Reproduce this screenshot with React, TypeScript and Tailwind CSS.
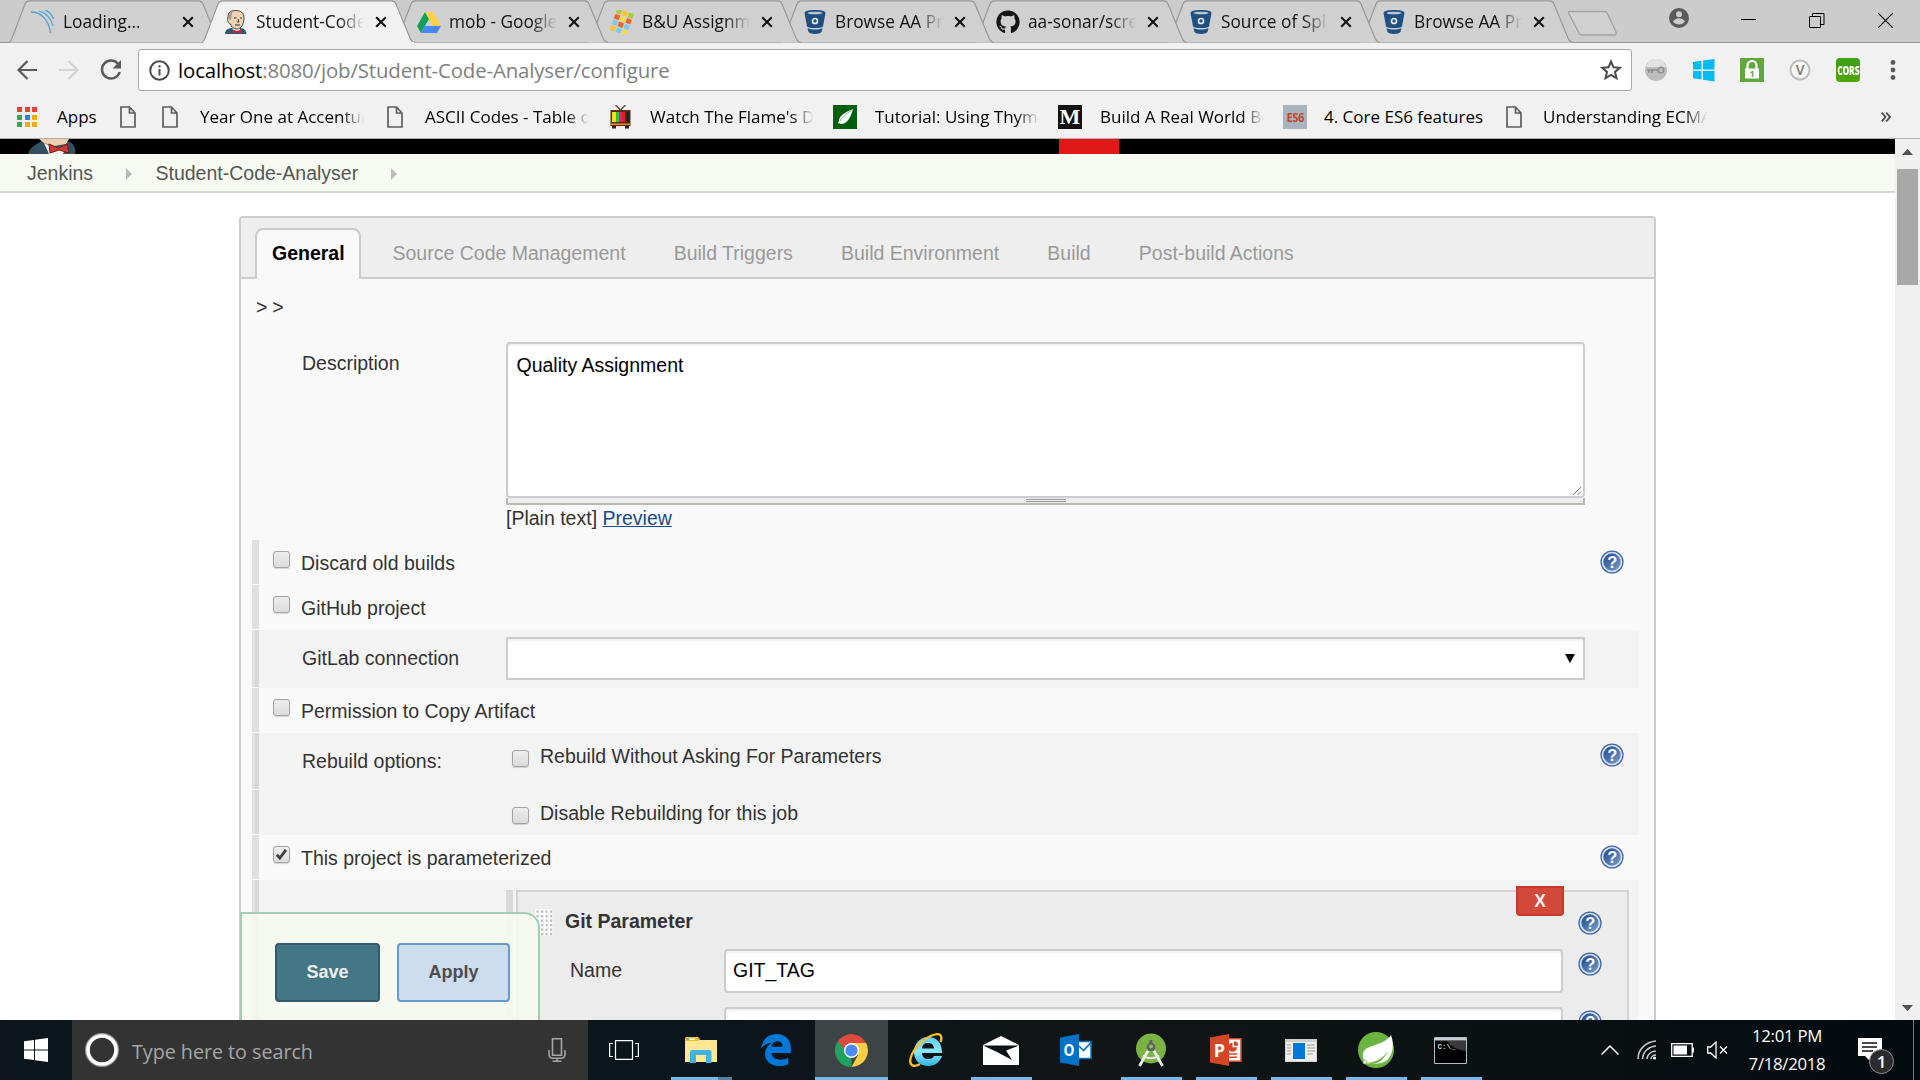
import React from "react";
import { FaGithub } from "react-icons/fa";

const chromeFont = "font-['Open_Sans',sans-serif]";

/* ---------- favicons ---------- */

function LoadingIcon() {
  return (
    <svg viewBox="0 0 24 24" className="h-6 w-6" fill="none" stroke="#4f9fd4" strokeWidth="1.3">
      <path d="M0 2c10 0 18 8 19.500 21" />
      <path d="M8 1c7 2 12 7 14 15" />
      <path d="M14 0c5 2 7 5 8.500 9" />
    </svg>
  );
}

function ButlerIcon() {
  return (
    <svg viewBox="0 0 24 24" className="h-6 w-6">
      <path d="M1 24c0-4 3-6 8-6h6c5 0 7 2 7.500 6z" fill="#33566b" />
      <path d="M8 15h8v6H9z" fill="#fff" />
      <path d="M4 7C4 2 7 .5 12 .5s8 2.500 8 7.500c0 6-3 11-7 11-3 0-6-2-6.500-5-2.500 0-3.500-4-2.500-7z" fill="#edd2b3" stroke="#3a332c" strokeWidth=".9" />
      <path d="M4.500 6C5 3 7 1.500 9 1.200 8 3 7.500 4 7.500 6L7 10l-2.500-1z" fill="#a59a8d" />
      <path d="M10 8h2.500M16 8h2M14 9l1 3h-2M11 15h5" stroke="#3a332c" strokeWidth="1" fill="none" />
      <path d="M9 19.500l4 1.500 4-1.500v4L13 22l-4 1.500z" fill="#d8232f" />
    </svg>
  );
}

function DriveIcon() {
  return (
    <svg viewBox="0 0 24 24" className="h-6 w-6">
      <path d="M8 2L0 16l4 7 8-14z" fill="#11a05b" />
      <path d="M8 2h8l8 14h-8z" fill="#fed046" />
      <path d="M8 16h16l-4 7H4z" fill="#4587f5" />
    </svg>
  );
}

function MosaicIcon() {
  const cells = ["#a8cf3a", "#f6c52c", "#a8cf3a", "#f2652a", "#fbe04a", "#f2652a", "#7cc8ee", "#f2652a", "#7cc8ee", "#f6c52c", "#7cc8ee", "#f6df3a"];
  return (
    <svg viewBox="0 0 24 24" className="h-6 w-6">
      <g transform="rotate(20 12 12)">
        {cells.map((c, i) => (
          <rect key={i} x={3 + (i % 3) * 6.2} y={0.5 + Math.floor(i / 3) * 6} width="5.200" height="5" rx=".8" fill={c} />
        ))}
      </g>
    </svg>
  );
}

function BucketIcon() {
  return (
    <svg viewBox="0 0 24 24" className="h-6 w-6">
      <path d="M1.500 3C2 .8 6 0 12 0s10 .8 10.500 3L20 16.500c-1 1-4 1.600-8 1.600s-7-.6-8-1.600z" fill="#205081" />
      <path d="M4.500 18.200c4 1.800 11 1.800 15 0L18.500 22c-1 1.300-3.500 2-6.500 2s-5.500-.7-6.500-2z" fill="#205081" />
      <ellipse cx="12" cy="3" rx="7.500" ry="1.300" fill="#b9c9da" />
      <circle cx="12" cy="11" r="2.500" fill="none" stroke="#e8eef4" strokeWidth="1.700" />
    </svg>
  );
}

const tabs = [
  { title: "Loading...", icon: <LoadingIcon /> },
  { title: "Student-Code", icon: <ButlerIcon />, active: true },
  { title: "mob - Google", icon: <DriveIcon /> },
  { title: "B&U Assignm", icon: <MosaicIcon /> },
  { title: "Browse AA Pr", icon: <BucketIcon /> },
  { title: "aa-sonar/scre", icon: <FaGithub className="h-6 w-6 text-[#161514]" /> },
  { title: "Source of Spl", icon: <BucketIcon /> },
  { title: "Browse AA Pr", icon: <BucketIcon /> },
];

function Tab({ title, icon, active, order }: { title: string; icon: React.ReactNode; active?: boolean; order: number }) {
  return (
    <div className="relative -mr-5 flex h-[43px] w-[213px] shrink-0 items-center pl-[22px]" style={{ zIndex: active ? 20 : 10 - order }}>
      <svg className="absolute inset-0 h-[43px] w-[213px]" viewBox="0 0 213 43">
        <path
          d="M0 42.500C1.500 42 2 40.500 3.500 37L16 4C17 1.500 18 .8 20 .8H190C192 .8 193 1.500 194 4L208 38C209 40.500 210 42 213 42.500"
          fill={active ? "#f1f1f1" : "#d0d0d0"}
          stroke="#999"
          strokeWidth="1.200"
        />
        {active && <path d="M1 42.600H212" stroke="#f1f1f1" strokeWidth="1.500" />}
      </svg>
      <span className="relative flex h-6 w-6">{icon}</span>
      <span className="relative ml-2 w-[108px] overflow-hidden text-[17.300px] leading-6 whitespace-nowrap text-[#111] [mask-image:linear-gradient(to_right,#000_76%,transparent)]">
        {title}
      </span>
      <svg className="relative ml-[11px] h-3 w-3" viewBox="0 0 12 12" stroke="#111" strokeWidth="2">
        <path d="M1.200 1.200L10.800 10.800M10.800 1.200L1.200 10.800" />
      </svg>
    </div>
  );
}

function TabStrip() {
  return (
    <div className="flex h-[43px] border-b border-[#999] bg-[#ccc] pl-[9px]">
      <div className="flex h-[43px]">
        {tabs.map((t, i) => (
          <Tab key={i} order={i} {...t} />
        ))}
      </div>
      <svg className="mt-[10px] ml-[13px] h-[27px] w-[54px]" viewBox="0 0 54 27">
        <path d="M4 1.500H38c2 0 3 .7 3.700 2.500L50 22c.8 2 0 3-2 3H17c-2.500 0-3.500-.8-4.300-2.600L3 4C2 2 2.500 1.500 4 1.500z" fill="#d0d0d0" stroke="#a2a2a2" strokeWidth="1.300" />
      </svg>
      <div className="ml-auto flex h-[40px] items-start">
        <svg className="mt-2 h-5 w-5" viewBox="0 0 20 20">
          <circle cx="10" cy="10" r="10" fill="#5a5a5a" />
          <circle cx="10" cy="6.200" r="3" fill="#ccc" />
          <path d="M4 13.500c1.500-2.500 4-3.200 6-3.200s4.500.7 6 3.200c-1.500 2-3.500 3-6 3s-4.500-1-6-3z" fill="#ccc" />
        </svg>
        <span className="mt-[19px] ml-[52px] h-px w-[15px] bg-black" />
        <svg className="mt-[12px] ml-[53px] h-4 w-4" viewBox="0 0 16 16" fill="none" stroke="#000">
          <path d="M.5 4.500H11.500V15.500H.5zM3.500 4V1.500H15V12.500H12" />
        </svg>
        <svg className="mt-[13px] mr-[27px] ml-[53px] h-[15px] w-[15px]" viewBox="0 0 15 15" stroke="#000" strokeWidth="1.100">
          <path d="M0 0L15 15M15 0L0 15" />
        </svg>
      </div>
    </div>
  );
}

function Toolbar() {
  return (
    <div className="flex h-[54px] items-center bg-[#f1f1f1] pl-[17px]">
      <svg className="h-5 w-5" viewBox="0 0 20 20" fill="none" stroke="#5a5a5a" strokeWidth="2.200">
        <path d="M20 10H2M10.500 1L1.500 10l9 9" />
      </svg>
      <svg className="ml-[22px] h-5 w-5" viewBox="0 0 20 20" fill="none" stroke="#d2d2d2" strokeWidth="2.200">
        <path d="M0 10H18M9.500 1l9 9-9 9" />
      </svg>
      <svg className="ml-[21px] h-[22px] w-[22px]" viewBox="0 0 22 22" fill="none" stroke="#5a5a5a" strokeWidth="2.500">
        <path d="M18.500 5.500A9 9 0 1 0 19.700 13" />
        <path d="M21 1v8.500h-8.500z" fill="#5a5a5a" stroke="none" />
      </svg>
      <div className="ml-4 flex h-[42px] w-[1494px] items-center rounded-[3px] border border-[#a8a8a8] bg-white pl-[10px]">
        <svg className="h-[21px] w-[21px]" viewBox="0 0 21 21">
          <circle cx="10.500" cy="10.500" r="9.300" fill="none" stroke="#4a4a4a" strokeWidth="2" />
          <path d="M9.500 9h2v6.500h-2zM9.500 5.300h2v2.200h-2z" fill="#4a4a4a" />
        </svg>
        <span className="ml-[8px] pb-px text-[20.400px] leading-7 tracking-[-0.130px] whitespace-nowrap text-[#808080]">
          <span className="text-black">localhost</span>:8080/job/Student-Code-Analyser/configure
        </span>
        <svg className="mr-[9px] ml-auto h-[22px] w-[22px]" viewBox="0 0 22 22" fill="none" stroke="#4a4a4a" strokeWidth="2">
          <path d="M11 2.500l2.500 5.800 6.300.5-4.800 4.100 1.500 6.200L11 15.800l-5.500 3.300L7 12.900 2.200 8.800l6.300-.5z" />
        </svg>
      </div>
      <svg className="ml-3 h-6 w-6" viewBox="0 0 24 24">
        <circle cx="12" cy="12" r="11" fill="#bdbdbd" />
        <path d="M2 9C4 3 8 1 12 1s8 2 10 8z" fill="#e2e2e2" />
        <circle cx="17" cy="12" r="2.800" fill="none" stroke="#8c8c8c" strokeWidth="1.600" />
        <path d="M14 12H3M5 12v3M8 12v3" stroke="#8c8c8c" strokeWidth="1.600" />
      </svg>
      <svg className="ml-6 h-6 w-6" viewBox="0 0 24 24" fill="#00bcf2">
        <path d="M1 4l8.500-1.300v8.700H1zM11 2.500L22.500 1v10.400H11zM1 13h8.500v8.500L1 20.200zM11 13h11.500v10.500L11 21.800z" />
      </svg>
      <svg className="ml-6 h-6 w-6" viewBox="0 0 24 24">
        <path d="M0 0h24v24H0z" fill="#5fa93c" />
        <path d="M7.500 11V7.500a4.500 4.500 0 0 1 9 0V11" fill="none" stroke="#fff" strokeWidth="2.200" />
        <path d="M5 10.500h14v10H5z" fill="#fff" />
        <text x="12" y="19" textAnchor="middle" fontSize="9" fontWeight="700" fill="#5fa93c">1</text>
      </svg>
      <svg className="ml-6 h-6 w-6" viewBox="0 0 24 24">
        <circle cx="12" cy="12" r="9.500" fill="#f7f7f7" stroke="#bbb" strokeWidth="2" />
        <text x="12" y="17" textAnchor="middle" fontSize="14" fontWeight="600" fill="#777">V</text>
      </svg>
      <span className="ml-6 flex h-6 w-6 items-center justify-center rounded bg-gradient-to-b from-[#3fa01a] to-[#4ca800]">
        <span className="scale-x-[0.78] scale-y-110 text-[11px] leading-none font-extrabold tracking-[-0.300px] text-white">CORS</span>
      </span>
      <svg className="ml-[30px] h-5 w-[6px]" viewBox="0 0 6 20" fill="#5a5a5a">
        <circle cx="3" cy="2.500" r="2.400" />
        <circle cx="3" cy="10" r="2.400" />
        <circle cx="3" cy="17.500" r="2.400" />
      </svg>
    </div>
  );
}

/* ---------- bookmarks ---------- */

function PageIcon() {
  return (
    <svg viewBox="0 0 16 22" className="h-[22px] w-4" fill="none" stroke="#5f5f5f" strokeWidth="1.700">
      <path d="M1 1h8.500L15 7v14H1zM9.500 1v6H15" />
    </svg>
  );
}

function AppsIcon() {
  const c = ["#ea4335", "#ea4335", "#ea4335", "#34a853", "#2f80ed", "#f9ab00", "#34a853", "#f9ab00", "#f9ab00"];
  return (
    <div className="grid h-5 w-5 grid-cols-3 gap-[2.500px]">
      {c.map((v, i) => (
        <span key={i} style={{ background: v }} />
      ))}
    </div>
  );
}

function TvIcon() {
  return (
    <svg viewBox="0 0 24 24" className="h-6 w-6">
      <path d="M6.500 0l5 5 5-5" stroke="#555" strokeWidth="1.500" fill="none" />
      <path d="M1.500 5h20v16h-20z" fill="#5a2c12" />
      <path d="M3 7h4v10H3z" fill="#f3e21b" />
      <path d="M7 7h3v10H7z" fill="#35c235" />
      <path d="M10 7h3v10h-3z" fill="#e01f8b" />
      <path d="M13 7h3v10h-3z" fill="#e02020" />
      <path d="M17.500 7h3v10h-3z" fill="#222" />
      <path d="M2 18.500h19v1.500H2z" fill="#e58a2d" />
      <path d="M3 21h4v2.500H3zM16 21h4v2.500h-4z" fill="#3a1c0c" />
    </svg>
  );
}

function LeafIcon() {
  return (
    <svg viewBox="0 0 24 24" className="h-6 w-6">
      <path d="M0 0h24v24H0z" fill="#005f0f" />
      <path d="M20 4c-4 2-14 5-14 12l-1 2 3 1c7 0 10-8 12-15z" fill="#fff" />
      <path d="M20 4c-5 4-9 6-13 12" stroke="#7fae86" fill="none" />
    </svg>
  );
}

const bookmarks: { icon: React.ReactNode; label?: string; cls: string; gap?: string; fade?: boolean }[] = [
  { icon: <AppsIcon />, label: "Apps", cls: "w-[103px]", gap: "ml-[20px]" },
  { icon: <PageIcon />, cls: "w-[42px]" },
  { icon: <PageIcon />, label: "Year One at Accentur", cls: "w-[225px]", gap: "ml-[22px]", fade: true },
  { icon: <PageIcon />, label: "ASCII Codes - Table o", cls: "w-[222px]", gap: "ml-[22px]", fade: true },
  { icon: <TvIcon />, label: "Watch The Flame's Da", cls: "w-[224px]", gap: "ml-[17px]", fade: true },
  { icon: <LeafIcon />, label: "Tutorial: Using Thyme", cls: "w-[225px]", gap: "ml-[18px]", fade: true },
  {
    icon: <span className="flex h-6 w-6 items-center justify-center bg-[#111] font-['Liberation_Serif',serif] text-[22px] leading-none font-bold text-white">M</span>,
    label: "Build A Real World Be",
    cls: "w-[225px]",
    gap: "ml-[18px]",
    fade: true,
  },
  {
    icon: (
      <span className="flex h-6 w-6 items-center justify-center bg-[#a7b4bd]">
        <span className="scale-x-[0.85] text-[13px] leading-none font-bold tracking-[-0.500px] text-[#c4432c]">ES6</span>
      </span>
    ),
    label: "4. Core ES6 features",
    cls: "w-[223px]",
    gap: "ml-[17px]",
  },
  { icon: <PageIcon />, label: "Understanding ECMA", cls: "w-[300px]", gap: "ml-[21px]", fade: true },
];

function Bookmarks() {
  return (
    <div className="flex h-[42px] items-center border-b border-[#b0b0b0] bg-[#f1f1f1] pb-px pl-[17px]">
      {bookmarks.map((b, i) => (
        <div key={i} className={`flex shrink-0 items-center ${b.cls}`}>
          <span className="shrink-0">{b.icon}</span>
          {b.label && (
            <span
              className={`${b.gap} block overflow-hidden text-[17px] leading-6 whitespace-nowrap text-black ${
                b.fade ? "w-[164px] [mask-image:linear-gradient(to_right,#000_86%,transparent)]" : ""
              }`}
            >
              {b.label}
            </span>
          )}
        </div>
      ))}
      <svg className="mr-[29px] ml-auto h-2.5 w-2.5" viewBox="0 0 10 10" fill="none" stroke="#4a4a4a" strokeWidth="1.800">
        <path d="M.7.700L4.500 5 .7 9.300M5.200.700L9 5 5.200 9.300" />
      </svg>
    </div>
  );
}

/* ---------- Jenkins page ---------- */

function Help() {
  return (
    <svg viewBox="0 0 24 24" className="h-6 w-6 shrink-0">
      <defs>
        <linearGradient id="helpFill" x1="0" y1="0" x2="1" y2="1">
          <stop offset="0" stopColor="#1b4289" />
          <stop offset="1" stopColor="#7ba3d3" />
        </linearGradient>
      </defs>
      <circle cx="12" cy="12" r="11.600" fill="#3f66a5" />
      <circle cx="12" cy="12" r="9.500" fill="url(#helpFill)" stroke="#d7e2f1" strokeWidth="1.700" />
      <text x="12.200" y="17.800" textAnchor="middle" fontSize="16.500" fontWeight="700" fill="#fff">?</text>
    </svg>
  );
}

function Check({ checked }: { checked?: boolean }) {
  return (
    <span className="flex h-[17px] w-[17px] shrink-0 items-center justify-center rounded-[3px] border border-[#a3a3a3] bg-gradient-to-b from-[#ededed] to-[#dcdcdc] shadow-[0_1px_1px_rgba(0,0,0,0.15)]">
      {checked && (
        <svg viewBox="0 0 13 13" className="h-[13px] w-[13px]" fill="none" stroke="#404040" strokeWidth="2.800">
          <path d="M1.800 6.800l3 3.200L11 1.800" />
        </svg>
      )}
    </span>
  );
}

function Row({ height, shaded, children }: { height: string; shaded?: boolean; children?: React.ReactNode }) {
  return (
    <div className={`flex ${height} ${shaded ? "bg-[#f3f3f3]" : ""}`}>
      <div className={`flex w-[7px] shrink-0 border-b border-[#f9f9f9] ${shaded ? "bg-[#d8d8d8]" : "bg-[#e0e0e0]"}`}>
        {shaded && <span className="w-[3px] bg-[#e0e0e0]" />}
      </div>
      {children}
    </div>
  );
}

function OptionRow({ label, checked, help }: { label: string; checked?: boolean; help?: boolean }) {
  return (
    <Row height="h-[45px]">
      <div className="flex w-full pr-[15px] pl-[14px]">
        <div className="mt-[11px]">
          <Check checked={checked} />
        </div>
        <span className="mt-[11px] ml-[11px] leading-6">{label}</span>
        {help && (
          <span className="mt-[10px] ml-auto">
            <Help />
          </span>
        )}
      </div>
    </Row>
  );
}

function Breadcrumbs() {
  const arrow = (
    <svg viewBox="0 0 6 12" className="h-3 w-1.5" fill="#bbb">
      <path d="M0 0l6 6-6 6z" />
    </svg>
  );
  return (
    <div className="flex h-[39px] items-center border-b-2 border-[#d3d7cf] bg-[#f6faf2] pt-[2px] pl-[27px] text-[19.500px] text-[#555753]">
      <span className="w-[99px]">Jenkins</span>
      {arrow}
      <span className="ml-[23.500px] w-[235.500px]">Student-Code-Analyser</span>
      {arrow}
    </div>
  );
}

function GitParameter() {
  return (
    <div className="ml-[247px] flex pt-[10px]">
      <div className="h-[200px] w-[7px] bg-[#d9d9d9]" />
      <div className="relative ml-[3px] h-[200px] w-[1113px] border-2 border-[#d3d3d3] bg-[#ececec]">
        <button className="absolute -top-[6px] right-[63px] h-[30px] w-12 rounded-b-[4px] border-2 border-[#c0392b] bg-[#d24939] text-[17.500px] leading-[26px] font-bold text-[#eee]">X</button>
        <div className="flex h-[55px] pt-[17px] pl-[17px]">
          <svg className="h-[27px] w-[18px]" viewBox="0 0 18 27">
            {Array.from({ length: 24 }, (_, i) => (
              <g key={i}>
                <rect x={(i % 4) * 4.5} y={Math.floor(i / 4) * 4.5} width="4" height="4" fill="#fff" />
                <rect x={(i % 4) * 4.5 + 1.5} y={Math.floor(i / 4) * 4.5 + 1.5} width="2.200" height="2.200" fill="#bdbdbd" />
              </g>
            ))}
          </svg>
          <b className="ml-3 leading-6">Git Parameter</b>
          <span className="mt-[2px] mr-[25px] ml-auto">
            <Help />
          </span>
        </div>
        <div className="flex h-[58px] pt-[2px] pl-[52px]">
          <span className="w-[154px] pt-[9px] leading-6">Name</span>
          <span className="h-[44px] w-[839px] rounded-[4px] border-2 border-[#ccc] bg-white pt-[7px] pl-[7px] leading-6 text-black shadow-[inset_0_2px_2px_rgba(0,0,0,0.06)]">GIT_TAG</span>
          <span className="mt-[3px] ml-[15px]">
            <Help />
          </span>
        </div>
        <div className="flex h-[58px] pt-[2px] pl-[206px]">
          <span className="h-[44px] w-[839px] rounded-[4px] border-2 border-[#ccc] bg-white shadow-[inset_0_2px_2px_rgba(0,0,0,0.06)]" />
          <span className="mt-[3px] ml-[15px]">
            <Help />
          </span>
        </div>
      </div>
    </div>
  );
}

function ConfigPanel() {
  return (
    <div className="mt-[23px] ml-[239px] h-[900px] w-[1417px] rounded-t-[4px] border-2 border-[#ccc] bg-[#f9f9f9] text-[19.500px] text-[#333]">
      <div className="flex h-[61px] items-end border-b-2 border-[#ccc] bg-[#eee] pl-[14px] text-[#999]">
        <div className="-mb-[2px] h-[51px] w-[106px] rounded-t-[8px] border-2 border-b-0 border-[#ccc] bg-[#f9f9f9] pt-[11px] pl-[15px] leading-6 font-bold text-black">General</div>
        <div className="ml-[31.500px] flex gap-[48.100px] pb-[12px] leading-6 whitespace-nowrap">
          <span>Source Code Management</span>
          <span>Build Triggers</span>
          <span>Build Environment</span>
          <span>Build</span>
          <span>Post-build Actions</span>
        </div>
      </div>
      <div className="h-[63px] pt-[16px] pl-[15px] leading-6 tracking-[-0.300px]">&gt; &gt;</div>
      <div className="flex h-[198px] pl-[61px]">
        <span className="w-[204px] pt-[9px] leading-6">Description</span>
        <div className="w-[1079px]">
          <div className="flex h-[156px] items-end justify-between rounded-[4px] border-2 border-[#ccc] bg-white pl-[8.500px] text-black shadow-[inset_0_2px_2px_rgba(0,0,0,0.06)]">
            <span className="self-start pt-[9px] leading-6">Quality Assignment</span>
            <svg className="h-3 w-3" viewBox="0 0 12 12" stroke="#777">
              <path d="M2 11L10 3M6.500 11L10 7.500" />
            </svg>
          </div>
          <div className="flex h-[7px] justify-center border-2 border-t-0 border-[#b8b8b0] bg-[#eee]">
            <span className="mt-px h-[3px] w-10 border-y border-[#999]" />
          </div>
          <div className="pt-px leading-6">
            [Plain text] <a className="text-[#204a87] underline">Preview</a>
          </div>
        </div>
      </div>
      <div className="pr-[15px] pl-[11px]">
        <OptionRow label="Discard old builds" help />
        <OptionRow label="GitHub project" />
        <Row height="h-[58px]" shaded>
          <span className="ml-[43px] w-[204px] pt-[16px] leading-6">GitLab connection</span>
          <div className="mt-[7px] flex h-[43px] w-[1079px] items-center justify-end border-2 border-[#ccc] bg-white pr-[8px] shadow-[inset_0_2px_2px_rgba(0,0,0,0.06)]">
            <svg viewBox="0 0 10 9" className="h-[9px] w-[10px]">
              <path d="M0 0h10L5 9z" />
            </svg>
          </div>
        </Row>
        <OptionRow label="Permission to Copy Artifact" />
        <Row height="h-[57px]" shaded>
          <span className="ml-[43px] w-[210px] pt-[16px] leading-6">Rebuild options:</span>
          <div className="mt-[17px]">
            <Check />
          </div>
          <span className="ml-[11px] pt-[11px] leading-6">Rebuild Without Asking For Parameters</span>
          <span className="mt-[10px] mr-[15px] ml-auto">
            <Help />
          </span>
        </Row>
        <Row height="h-[45px]" shaded>
          <div className="mt-[17px] ml-[253px]">
            <Check />
          </div>
          <span className="ml-[11px] pt-[11px] leading-6">Disable Rebuilding for this job</span>
        </Row>
        <OptionRow label="This project is parameterized" checked help />
        <Row height="h-[200px]" shaded>
          <GitParameter />
        </Row>
      </div>
    </div>
  );
}

function JenkinsPage() {
  return (
    <div className="relative flex h-[881px] overflow-hidden bg-white font-['Liberation_Sans',Arial,sans-serif]">
      <div className="w-[1895px] shrink-0">
        <div className="flex h-[15px] items-start bg-black pl-[28px]">
          <svg className="h-[15px] w-[50px]" viewBox="0 0 50 15">
            <path d="M0 15C2 8 9 5 14 2l28 1c5 3 6 8 5 12z" fill="#335061" />
            <path d="M11 0h30l-3 5-12 2-10-3z" fill="#edcfae" />
            <path d="M16 4l5 11h14l4-9-12 3z" fill="#f0f0f0" />
            <path d="M21 5l9 4 9-4 2 9-10-3-9 3z" fill="#d33833" stroke="#701a18" />
          </svg>
          <span className="ml-[981px] h-[15px] w-[60px] bg-[#e01818]" />
        </div>
        <Breadcrumbs />
        <ConfigPanel />
      </div>
      <div className="flex w-[25px] flex-col items-center bg-[#f0f0f0]">
        <svg viewBox="0 0 11 6" className="mt-[10px] h-[6px] w-[11px]" fill="#505050">
          <path d="M0 6L5.500 0 11 6z" />
        </svg>
        <span className="mt-[14px] h-[116px] w-[21px] bg-[#a8a8a8]" />
        <svg viewBox="0 0 11 6" className="mt-auto mb-[9px] h-[6px] w-[11px]" fill="#505050">
          <path d="M0 0L5.500 6 11 0z" />
        </svg>
      </div>
      <div className="absolute top-[773px] left-[240px] flex h-[110px] w-[300px] gap-[17px] rounded-tr-[16px] border-2 border-b-0 border-[#a4cdb8] bg-[#f5f9ef]/90 pt-[29px] pl-[33px] text-[18px] font-bold">
        <button className="h-[59px] w-[105px] rounded-[4px] border-2 border-[#345a6b] bg-[#437786] text-[#eee]">Save</button>
        <button className="h-[59px] w-[113px] rounded-[4px] border-2 border-[#6699cc] bg-[#ccdded] text-[#4d4d4d]">Apply</button>
      </div>
    </div>
  );
}

/* ---------- taskbar ---------- */

function ExplorerIcon() {
  return (
    <svg viewBox="0 0 32 27" className="h-[27px] w-8">
      <path d="M0 1h12l3 2h17v22H0z" fill="#ffe793" />
      <path d="M1 0h12l2 2-2 2H0V1z" fill="#f0bd2c" />
      <path d="M4 1.500h6v1.500H4z" fill="#fff" />
      <path d="M2 1.500h2v1.500H2z" fill="#3fb3e6" />
      <path d="M5 26V14.500l1.500-1.500h18.500l1.500 1.500V26h-5.500v-8H11v8z" fill="#3fb3e6" />
    </svg>
  );
}

function EdgeIcon() {
  return (
    <svg viewBox="0 0 30 32" className="h-8 w-[30px]">
      <path d="M0 14.500C1.500 5.500 7 0 15.500 0 25 0 30 6.500 30 14.500V19H10.500c.3 4.700 4.500 6.700 9 6.700 3 0 5.500-.7 7.800-2v6.500c-3 1.300-6 1.800-9.300 1.800C9.500 32 4 27 4 20c0-5 2.600-9 7.200-11.300C6.300 8.800 2.500 11 0 14.500zm10.700-1.700h10.800c0-3.600-1.700-5.500-5-5.500-3.200 0-5.300 2.400-5.800 5.500z" fill="#0078d7" />
    </svg>
  );
}

function ChromeIcon() {
  return (
    <svg viewBox="0 0 32 32" className="h-[33px] w-[33px]">
      <path d="M16 16V32A16 16 0 0 1 2.100 8z" fill="#1da261" />
      <path d="M16 8.500h14.100A16 16 0 0 1 16 32l6.500-12z" fill="#ffce43" />
      <path d="M9.500 20L2.100 8 8 5l8 4z" fill="#1da261" />
      <path d="M2.900 6.800A16 16 0 0 1 30.100 8.700H16a7.500 7.500 0 0 0-7.400 6z" fill="#dd4b3e" />
      <circle cx="16" cy="16" r="7.300" fill="#fff" />
      <circle cx="16" cy="16" r="5.900" fill="#4a8af4" />
    </svg>
  );
}

function IeIcon() {
  return (
    <svg viewBox="0 0 34 34" className="h-[34px] w-[34px]">
      <defs>
        <linearGradient id="ieFill" x1="0" y1="0" x2="0" y2="1">
          <stop offset="0" stopColor="#5ccdf5" />
          <stop offset=".5" stopColor="#8be8ff" />
          <stop offset="1" stopColor="#35b1e6" />
        </linearGradient>
      </defs>
      <path d="M19 4c9 0 14 6 14 16H13c0 4 3 6 6.500 6 3 0 4.500-1 5.500-3h8c-2 6-7 10-13.500 10C10.500 33 5 27 5 19S11 4 19 4zm-6 11.500h12c0-3.500-2.500-5.500-6-5.500s-6 2-6 5.500z" fill="url(#ieFill)" />
      <path d="M31.500 9C34 3 31 0 26 1.500 16 4 4 15 1.500 25.500 0 33 5 34.500 11 31" fill="none" stroke="#fac21c" strokeWidth="2.300" />
    </svg>
  );
}

function MailIcon() {
  return (
    <svg viewBox="0 0 36 29" className="h-[29px] w-9">
      <path d="M0 9L18 0l18 9v20H0z" fill="#fff" />
      <path d="M0 9.500h36l-13 5 6 9.500L14 16z" fill="#0d1214" />
    </svg>
  );
}

function OutlookIcon() {
  return (
    <svg viewBox="0 0 32 32" className="h-8 w-8">
      <path d="M17 7.500h14v17H17z" fill="#fff" stroke="#0072c6" strokeWidth="1.500" />
      <path d="M19 12l4.500 4.500 7.500-8" fill="none" stroke="#0072c6" strokeWidth="1.600" />
      <path d="M0 3.500L19 0v32L0 28.500z" fill="#0072c6" />
      <text x="9" y="22" textAnchor="middle" fontSize="16.500" fontWeight="700" fill="#fff" textLength="11" lengthAdjust="spacingAndGlyphs">O</text>
    </svg>
  );
}

function AndroidStudioIcon() {
  return (
    <svg viewBox="0 0 32 34" className="h-[34px] w-8">
      <circle cx="16" cy="15.500" r="15" fill="#7cb342" />
      <path d="M4.500 33l9.500-17M27.500 33L18 16" fill="none" stroke="#eee" strokeWidth="2.800" />
      <path d="M8 22.500c4 3.500 12 3.500 16 0" fill="none" stroke="#eee" strokeWidth="2" />
      <path d="M14.500 7h3v3a4.500 4.500 0 0 1 2.500 6l-1 2h-6l-1-2a4.500 4.500 0 0 1 2.500-6z" fill="#5c6360" />
      <circle cx="16" cy="13.500" r="2" fill="#8bbf5a" />
    </svg>
  );
}

function PowerPointIcon() {
  return (
    <svg viewBox="0 0 32 32" className="h-8 w-8">
      <path d="M17 4.700h14v22.500H17z" fill="#fff" stroke="#d24726" strokeWidth="1.500" />
      <path d="M19 20h8M19 23.300h8" stroke="#d24726" strokeWidth="1.500" />
      <path d="M22.500 8.800A4.500 4.500 0 1 0 27 13.300H22.500z" fill="#d24726" />
      <path d="M24 7.300v4.500h4.300A4.500 4.500 0 0 0 24 7.300z" fill="#d24726" />
      <path d="M0 3.500L19 0v32L0 28.500z" fill="#d24726" />
      <text x="9.500" y="22.500" textAnchor="middle" fontSize="18" fontWeight="700" fill="#fff">P</text>
    </svg>
  );
}

function WindowIcon() {
  return (
    <svg viewBox="0 0 32 23" className="h-[23px] w-8">
      <path d="M0 0h32v23H0z" fill="#eee" stroke="#bbb" />
      <path d="M0 0h32v3H0z" fill="#cfcfcf" />
      <path d="M8 4h12v16H8z" fill="#0078d7" />
      <path d="M2 6h4M2 9h4M2 12h4M2 15h4M22 6h8M22 9h8M22 12h8M22 15h6" stroke="#999" strokeWidth="1.200" />
    </svg>
  );
}

function SpringIcon() {
  return (
    <svg viewBox="0 0 36 36" className="h-9 w-9">
      <circle cx="18" cy="18" r="18" fill="#6db33f" />
      <path d="M33 3c3 8 2.500 17-2 23-4 5.500-12 6.500-23 5.500C5 28 4 24 5.500 20 8.500 12.500 26 14 33 3z" fill="#fff" />
      <path d="M8 31c8 0 17-4 22-12-4 9-10 13-17 13z" fill="#6db33f" />
      <circle cx="7" cy="30" r="2" fill="#fff" stroke="#6db33f" strokeWidth=".8" />
    </svg>
  );
}

function CmdIcon() {
  return (
    <svg viewBox="0 0 33 27" className="h-[27px] w-[33px]">
      <path d="M.5.500h32v26H.5z" fill="#000" stroke="#b5bcc4" />
      <path d="M1 1h31v2.500H1z" fill="#c9ced6" />
      <path d="M13 4h19v10C24 13 17 10 13 4z" fill="#3a3a3a" />
      <text x="3.500" y="11.500" fontFamily="Liberation Mono, monospace" fontSize="7.500" fontWeight="700" fill="#ddd">C:\_</text>
    </svg>
  );
}

function TaskItem({ children, line, active }: { children: React.ReactNode; line?: boolean; active?: boolean }) {
  return (
    <div className="flex h-[60px] w-[75px] shrink-0 flex-col items-center">
      <div className={`flex h-[57px] items-center justify-center pt-[3px] ${active ? "w-[73px] bg-[#3d4446] pr-px" : "w-full pr-[2px]"}`}>{children}</div>
      {line && <span className={`h-[3px] bg-[#76b9ed] ${active ? "w-[73px]" : "w-[61px]"}`} />}
    </div>
  );
}

function Taskbar() {
  return (
    <div className={`flex h-[60px] bg-[linear-gradient(90deg,#0c161b_0%,#0a161c_35%,#111515_55%,#0c1213_75%,#030b10_100%)] text-white ${chromeFont}`}>
      <div className="flex w-[72px] items-center pl-6">
        <svg viewBox="0 0 24 24" className="h-6 w-6" fill="#fff">
          <path d="M0 3.300L10 2v9.500H0zM11 1.800L24 0v11.500H11zM0 12.500h10V22L0 20.700zM11 12.500h13V24L11 22.200z" />
        </svg>
      </div>
      <div className="flex w-[516px] items-center bg-[#333] pr-[22px] pl-[13px]">
        <svg viewBox="0 0 34 34" className="h-[34px] w-[34px]" fill="none">
          <circle cx="17" cy="17" r="16" stroke="#999" strokeWidth="2" />
          <circle cx="17" cy="17" r="14" stroke="#fff" strokeWidth="3.600" />
        </svg>
        <span className="ml-[13px] pt-[3px] text-[19.800px] leading-7 tracking-[-0.060px] text-[#a6a6a6]">Type here to search</span>
        <svg viewBox="0 0 18 24" className="ml-auto h-6 w-[18px]" fill="none" stroke="#a6a6a6" strokeWidth="1.600">
          <path d="M4.500 .8h9v16.500h-9zM1 12v4c0 3 1.500 4.300 4 4.300h8c2.500 0 4-1.300 4-4.300v-4M9 20v3M4.500 23.200h9" />
        </svg>
      </div>
      <div className="flex w-[76px] shrink-0 items-center justify-center pr-[5px]">
        <svg viewBox="0 0 30 20" className="h-5 w-[30px]" fill="none" stroke="#fff" strokeWidth="1.200">
          <path d="M6.500 .6h17v18.800h-17zM4 3.500H.6v13H4M26 3.500h3.400v13H26" />
        </svg>
      </div>
      <div className="flex h-[60px] w-[75px] shrink-0 flex-col pl-[7px]">
        <div className="flex h-[57px] items-center pt-[3px] pl-[14px]">
          <ExplorerIcon />
        </div>
        <div className="flex h-[3px]">
          <span className="w-[47px] bg-[#76b9ed]" />
          <span className="w-[14px] bg-[#55809f]" />
        </div>
      </div>
      <TaskItem><EdgeIcon /></TaskItem>
      <TaskItem line active><ChromeIcon /></TaskItem>
      <TaskItem><IeIcon /></TaskItem>
      <TaskItem line><MailIcon /></TaskItem>
      <TaskItem><OutlookIcon /></TaskItem>
      <TaskItem line><AndroidStudioIcon /></TaskItem>
      <TaskItem line><PowerPointIcon /></TaskItem>
      <TaskItem line><WindowIcon /></TaskItem>
      <TaskItem line><SpringIcon /></TaskItem>
      <TaskItem line><CmdIcon /></TaskItem>
      <div className="ml-auto flex items-center">
        <svg viewBox="0 0 18 10" className="h-2.5 w-[18px]" fill="none" stroke="#fff" strokeWidth="1.500">
          <path d="M.5 9.500L9 1l8.500 8.500" />
        </svg>
        <svg viewBox="0 0 20 20" className="ml-[18px] h-5 w-5" fill="none" stroke="#ccc" strokeWidth="1.500">
          <path d="M1 19C1 9 9 2 19 1M5.500 19C6 11 12 6.500 19 6M10 19c0-4 4-8 9-8M14 19c0-2 2-4 5-4" />
          <circle cx="17.500" cy="18" r="1.600" fill="#fff" stroke="none" />
        </svg>
        <svg viewBox="0 0 23 14" className="ml-[14px] h-3.5 w-[23px]" fill="none" stroke="#fff" strokeWidth="1.300">
          <path d="M.7.700h20.500v12.600H.7zM22.400 4.500v5" />
          <path d="M2.500 2.500h13.500v9H2.500z" fill="#fff" stroke="none" />
        </svg>
        <svg viewBox="0 0 21 18" className="ml-[13px] h-[18px] w-[21px]" fill="none" stroke="#fff" strokeWidth="1.300">
          <path d="M.7 6h3L9 1v16L3.700 12h-3zM13 5.500l7 7M20 5.500l-7 7" />
        </svg>
        <div className="ml-[16px] w-[86px] text-center text-[16.800px] leading-[28px] tracking-[-0.300px] whitespace-nowrap">
          <div>12:01 PM</div>
          <div>7/18/2018</div>
        </div>
        <div className="relative ml-[28px] h-[60px] w-[55px]">
          <svg viewBox="0 0 24 25" className="mt-[18px] h-[25px] w-6">
            <path d="M0 0h24v18H13v6l-6-6H0z" fill="#fff" />
            <path d="M4 5h15M4 9h15M4 13h11" stroke="#111" strokeWidth="1.300" />
          </svg>
          <span className="absolute top-[29px] left-[11px] flex h-[25px] w-[25px] items-center justify-center rounded-full border border-[#8a8a8a] bg-[#2a2c2e] text-[17px] leading-none font-semibold">1</span>
        </div>
        <span className="mr-[6px] h-[60px] w-px bg-[#777]" />
      </div>
    </div>
  );
}

export default function App() {
  return (
    <div className="h-[1080px] w-[1920px] overflow-hidden">
      <div className={chromeFont}>
        <TabStrip />
        <Toolbar />
        <Bookmarks />
      </div>
      <JenkinsPage />
      <Taskbar />
    </div>
  );
}
